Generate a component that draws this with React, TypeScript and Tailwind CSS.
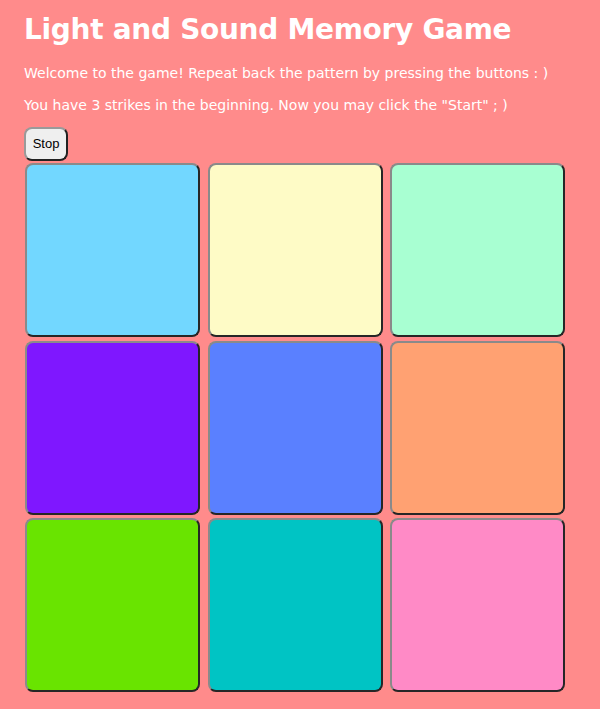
const squares = [
  "bg-[#72d7ff]",
  "bg-[#fefbc6]",
  "bg-[#a8ffd2]",
  "bg-[#7f17ff]",
  "bg-[#5a80ff]",
  "bg-[#ffa172]",
  "bg-[#69e400]",
  "bg-[#00c4c4]",
  "bg-[#ff8ac6]",
];

export default function App() {
  return (
    <div className="min-h-[709px] bg-[#ff8b8b] px-6 pt-[13px] text-white font-['DejaVu_Sans',sans-serif]">
      <h1 className="text-[28px] font-bold leading-[34px] tracking-[-0.3px]">Light and Sound Memory Game</h1>
      <p className="mt-[18px] text-[14px] leading-[17px]">
        Welcome to the game! Repeat back the pattern by pressing the buttons : )
      </p>
      <p className="mt-[15px] text-[14px] leading-[17px]">
        You have 3 strikes in the beginning. Now you may click the "Start" ; )
      </p>
      <button
        type="button"
        className="mt-[13px] h-[34px] w-[44px] rounded-lg border-2 border-t-[#9a9a9a] border-l-[#9a9a9a] border-b-[#222] border-r-[#222] bg-[#efefef] text-[13px] text-black font-['Liberation_Sans',sans-serif]"
      >
        Stop
      </button>
      <div className="mt-[2px] ml-px grid grid-cols-[175px_175px_175px] gap-x-[7.5px] gap-y-[3.5px]">
        {squares.map((c) => (
          <button
            key={c}
            type="button"
            className={`h-[174px] rounded-lg border-2 border-t-[#8a8a8a] border-l-[#8a8a8a] border-b-[#262626] border-r-[#262626] ${c}`}
          />
        ))}
      </div>
    </div>
  );
}
